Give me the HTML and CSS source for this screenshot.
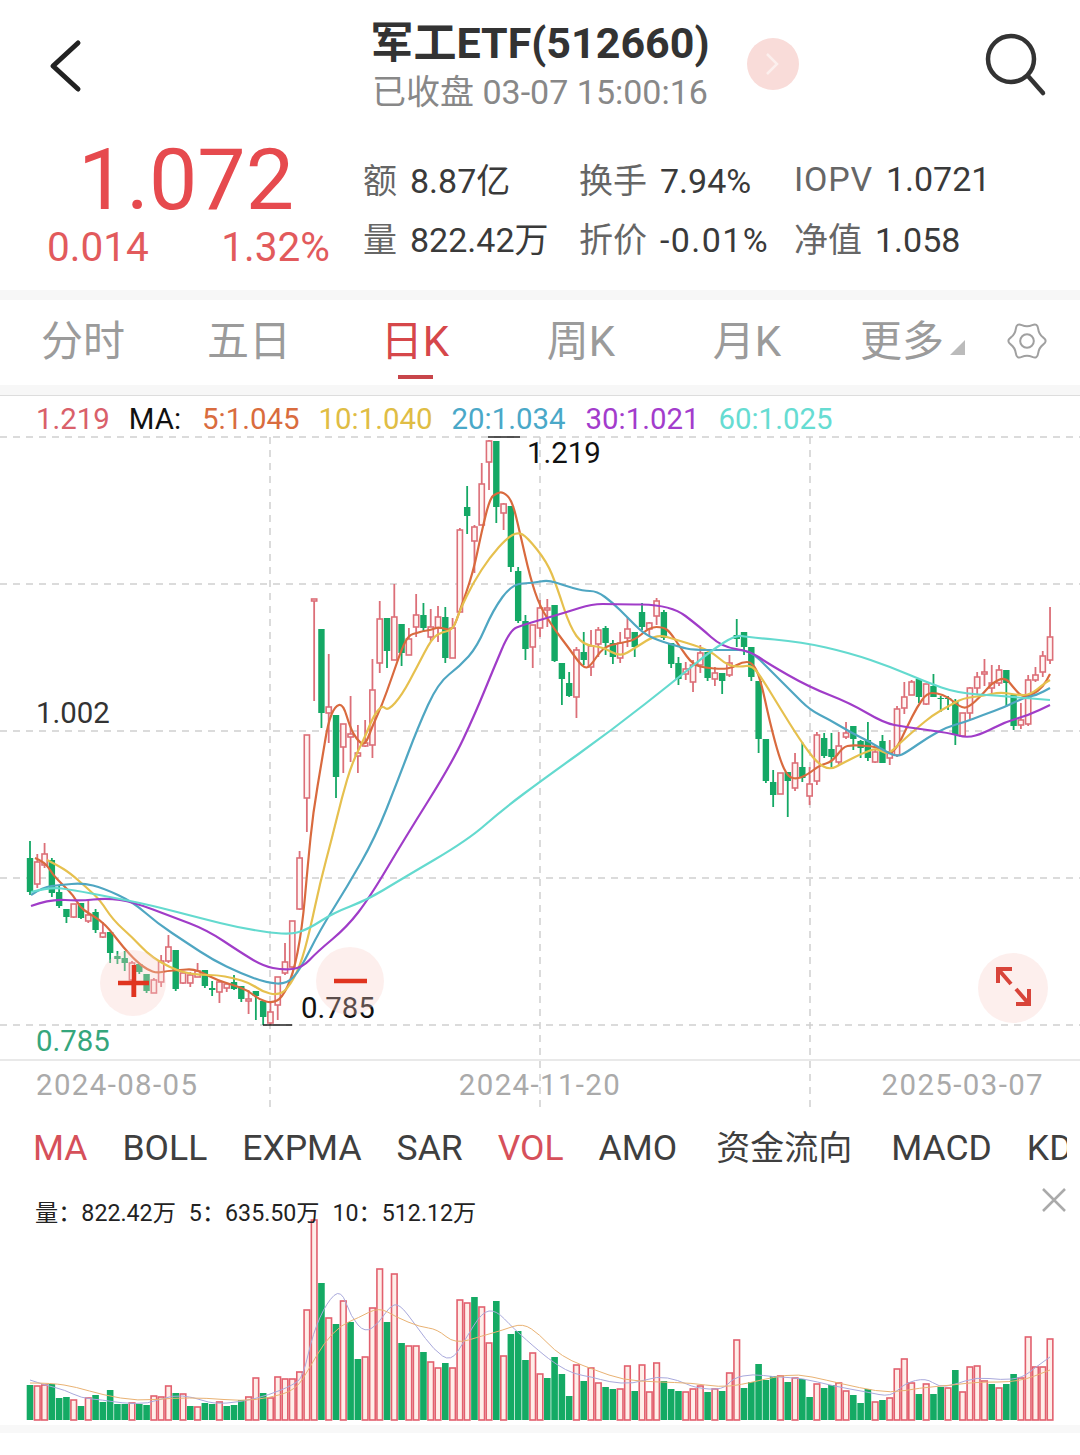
FILE: index.html
```html
<!DOCTYPE html>
<html lang="zh-CN">
<head>
  <meta charset="UTF-8" />
  <meta name="viewport" content="width=device-width, initial-scale=1.0"/>
  <title>军工ETF(512660)</title>
  <link rel="stylesheet" href="styles.css">
</head>
<body>

<header class="topbar">
  <div class="topbar-left">
    <svg class="back-icon" width="36" height="56" viewBox="0 0 36 56"><path d="M30 5 L5 28 L30 51"/></svg>
  </div>
  <div class="title-block">
    <div class="title">军工ETF(512660)</div>
    <div class="subtitle">已收盘 03-07 15:00:16</div>
  </div>
  <div class="topbar-right">
    <div class="next-badge">
      <svg width="20" height="26" viewBox="0 0 20 26"><path d="M4 3 L14 13 L4 23"/></svg>
    </div>
    <svg class="search-icon" width="64" height="64" viewBox="0 0 64 64"><circle cx="28" cy="26" r="23"/><path d="M45 43 L60 60"/></svg>
  </div>
</header>

<section class="quote">
  <div class="price-box">
    <div class="price">1.072</div>
    <div class="change"><span>0.014</span><span>1.32%</span></div>
  </div>
  <div class="stats">
    <div class="stat"><span class="label">额</span><span class="value">8.87亿</span></div>
    <div class="stat"><span class="label">换手</span><span class="value">7.94%</span></div>
    <div class="stat"><span class="label wide">IOPV</span><span class="value">1.0721</span></div>
    <div class="stat"><span class="label">量</span><span class="value">822.42万</span></div>
    <div class="stat"><span class="label">折价</span><span class="value neg">-0.01%</span></div>
    <div class="stat"><span class="label">净值</span><span class="value">1.058</span></div>
  </div>
</section>

<nav class="period-tabs">
  <a class="period">分时</a>
  <a class="period">五日</a>
  <a class="period active">日K</a>
  <a class="period">周K</a>
  <a class="period">月K</a>
  <a class="period more">更多<i class="corner"></i></a>
  <svg class="gear" width="40" height="40" viewBox="-22 -22 44 44">
    <path d="M18,-3.75 Q23,0 18,3.75 Q13,7.5 12.25,13.7 Q11.5,19.9 5.75,17.45 Q0,15 -5.75,17.45 Q-11.5,19.9 -12.25,13.7 Q-13,7.5 -18,3.75 Q-23,0 -18,-3.75 Q-13,-7.5 -12.25,-13.7 Q-11.5,-19.9 -5.75,-17.45 Q0,-15 5.75,-17.45 Q11.5,-19.9 12.25,-13.7 Q13,-7.5 18,-3.75Z"/>
    <circle r="7.5"/>
  </svg>
</nav>

<section class="chart">
  <div class="ma-legend">
    <span class="c-red">1.219</span>
    <span class="c-black">MA:</span>
    <span class="c-ma5">5:1.045</span>
    <span class="c-ma10">10:1.040</span>
    <span class="c-ma20">20:1.034</span>
    <span class="c-ma30">30:1.021</span>
    <span class="c-ma60">60:1.025</span>
  </div>

  <svg class="kline" width="1080" height="680" viewBox="0 432 1080 680">
    <g class="grid">
      <path d="M0 437H1080M0 584H1080M0 731H1080M0 878H1080M0 1025H1080"/>
      <path d="M270 437V1112M540 437V1112M810 437V1112"/>
    </g>
    <path class="axis" d="M0 1060H1080"/>
    <g id="candles"></g>
    <g id="maLines"></g>
    <path class="marker" d="M488 437H520M263 1025H292"/>
    <text class="lbl" x="527" y="463">1.219</text>
    <text class="lbl" x="301" y="1018">0.785</text>
    <text class="lbl dark" x="36" y="723">1.002</text>
    <text class="lbl green" x="36" y="1051">0.785</text>
    <text class="lbl date" x="36" y="1095">2024-08-05</text>
    <text class="lbl date" x="540" y="1095" text-anchor="middle">2024-11-20</text>
    <text class="lbl date" x="1044" y="1095" text-anchor="end">2025-03-07</text>
  </svg>

  <div class="zoom-btn zoom-in">
    <svg width="66" height="66" viewBox="0 0 66 66"><path d="M18 33H49M34 15V47"/></svg>
  </div>
  <div class="zoom-btn zoom-out">
    <svg width="68" height="68" viewBox="0 0 68 68"><path d="M18 34H51"/></svg>
  </div>
  <div class="zoom-btn expand">
    <svg width="70" height="70" viewBox="0 0 70 70"><path d="M34 16H20V30M20 16L33 31M38 36L51 51M38 51H51V36"/></svg>
  </div>
</section>

<nav class="indicator-tabs">
  <span class="on">MA</span>
  <span>BOLL</span>
  <span>EXPMA</span>
  <span>SAR</span>
  <span class="on">VOL</span>
  <span>AMO</span>
  <span class="flow">资金流向</span>
  <span>MACD</span>
  <span>KDJ</span>
</nav>

<section class="volume">
  <div class="vol-legend">
    <span>量：822.42万</span>
    <span>5：635.50万</span>
    <span>10：512.12万</span>
  </div>
  <svg class="close-icon" width="26" height="26" viewBox="0 0 26 26"><path d="M2 2L24 24M24 2L2 24"/></svg>
  <svg class="vol-chart" width="1080" height="240" viewBox="0 1185 1080 240">
    <g id="volBars"></g>
    <g id="volLines"></g>
  </svg>
</section>
<div class="foot-band"></div>

<script src="script.js"></script>
</body>
</html>
```

FILE: styles.css
```css
* {
  box-sizing: border-box;
}

html, body {
  height: 1455px;
  overflow: hidden;
}

body {
  margin: 0;
  background: white;
  color: #333;
  font-family: Roboto, "Noto Sans CJK SC", sans-serif;
}

/* top bar */
.topbar {
  display: grid;
  grid-template-columns: 1fr auto 1fr;
  height: 130px;
  align-items: center;
}

.topbar-left {
  padding-left: 48px;
  padding-top: 2px;
}

.back-icon {
  display: block;
}

.back-icon path {
  fill: none;
  stroke: #222;
  stroke-width: 5;
  stroke-linecap: round;
  stroke-linejoin: round;
}

.title-block {
  align-self: start;
  padding-top: 18px;
  text-align: center;
}

.title {
  font-size: 43px;
  line-height: 50px;
  font-weight: 700;
  color: #333;
}

.subtitle {
  font-size: 34px;
  line-height: 49px;
  color: #888;
}

.topbar-right {
  display: flex;
  align-items: center;
  justify-content: space-between;
  padding-left: 37px;
  padding-right: 33px;
}

.next-badge {
  display: flex;
  width: 52px;
  height: 52px;
  margin-top: -2px;
  border-radius: 50%;
  background: #f9dcd9;
  align-items: center;
  justify-content: center;
}

.next-badge path {
  fill: none;
  stroke: #fcefed;
  stroke-width: 2.5;
}

.search-icon circle,
.search-icon path {
  fill: none;
  stroke: #333;
  stroke-width: 4.5;
  stroke-linecap: round;
}

/* price and stats */
.quote {
  display: flex;
  height: 160px;
  padding-left: 47px;
}

.price-box {
  width: 283px;
  color: #e64a4e;
}

.price {
  padding-top: 2px;
  padding-right: 5px;
  font-size: 86px;
  line-height: 96px;
  text-align: center;
}

.change {
  display: flex;
  justify-content: space-between;
  margin-top: -3px;
  font-size: 40.5px;
  line-height: 44px;
  color: #e25a5c;
}

.stats {
  display: grid;
  grid-template-columns: 216px 215px auto;
  grid-auto-rows: 59px;
  margin-left: 33px;
  padding-top: 19px;
  font-size: 34px;
  align-items: center;
}

.stat .label {
  margin-right: 13px;
  color: #666;
}

.stat .label.wide {
  letter-spacing: 0.8px;
}

.stat .value {
  color: #3a3a3a;
}

.stat .value.neg {
  letter-spacing: 1.4px;
}

/* period tabs */
.period-tabs {
  position: relative;
  display: flex;
  height: 105px;
  padding-bottom: 10px;
  border-top: 10px solid #f7f7f7;
  border-bottom: 10px solid #f7f7f7;
}

.period {
  position: relative;
  width: 166px;
  text-align: center;
  font-size: 42px;
  line-height: 83px;
  color: #9b9b9b;
}

.period.active {
  color: #d6474a;
}

.period.active::after {
  content: "";
  position: absolute;
  left: 66px;
  bottom: -4px;
  width: 35px;
  height: 4px;
  background: #c8454a;
}

.more {
  width: 160px;
  padding-right: 16px;
}

.corner {
  position: absolute;
  right: 25px;
  top: 40px;
  border-left: 15px solid transparent;
  border-bottom: 15px solid #bbb;
}

.gear {
  position: absolute;
  right: 33px;
  top: 21px;
}

.gear path,
.gear circle {
  fill: none;
  stroke: #a0a0a0;
  stroke-width: 2.2;
}

/* k-line */
.chart {
  position: relative;
  height: 717px;
  border-top: 1px solid #ddd;
}

.ma-legend {
  display: flex;
  gap: 19px;
  height: 36px;
  padding-top: 8px;
  padding-left: 36px;
  font-size: 29.4px;
  line-height: 30px;
  white-space: nowrap;
}

.c-red { color: #d9606a; }
.c-black { color: #111; margin-right: 2px; }
.c-ma5 { color: #d96c3e; }
.c-ma10 { color: #dfbd45; }
.c-ma20 { color: #4aa8c8; margin-right: 1px; }
.c-ma30 { color: #a33ccc; }
.c-ma60 { color: #66dcd2; }

.kline {
  display: block;
}

.grid path {
  fill: none;
  stroke: #cfcfcf;
  stroke-width: 1.5;
  stroke-dasharray: 7 6;
}

.axis {
  stroke: #e2e2e2;
  stroke-width: 1.5;
}

.marker {
  stroke: #222;
  stroke-width: 1.5;
}

.lbl {
  font-size: 29.4px;
  fill: #111;
}

.lbl.dark { fill: #333; }
.lbl.green { fill: #35a67c; }
.lbl.date {
  fill: #aaa;
  letter-spacing: 1.4px;
}

.zoom-btn {
  position: absolute;
  border-radius: 50%;
  background: rgba(249, 205, 198, 0.32);
}

.zoom-btn svg {
  display: block;
}

.zoom-btn path {
  fill: none;
  stroke: #e0341f;
  stroke-width: 4.5;
}

.zoom-in {
  left: 100px;
  top: 554px;
  width: 66px;
  height: 66px;
}

.zoom-out {
  left: 316px;
  top: 551px;
  width: 68px;
  height: 68px;
}

.expand {
  left: 978px;
  top: 557px;
  width: 70px;
  height: 70px;
}

.expand path {
  stroke: #d8443a;
  stroke-width: 4;
}

/* indicator tabs */
.indicator-tabs {
  display: flex;
  gap: 35px;
  width: 1067px;
  height: 73px;
  padding-left: 33px;
  overflow: hidden;
  font-size: 35.5px;
  line-height: 72px;
  white-space: nowrap;
  color: #3f3f3f;
}

.indicator-tabs .on {
  color: #d6505a;
}

.indicator-tabs .flow {
  margin: 0 4px;
  font-size: 34px;
}

/* volume */
.volume {
  position: relative;
  height: 240px;
}

.vol-legend {
  position: absolute;
  left: 35px;
  top: 13px;
  display: flex;
  gap: 13px;
  font-size: 23.2px;
  line-height: 30px;
  color: #222;
  z-index: 1;
}

.close-icon {
  position: absolute;
  right: 13px;
  top: 2px;
}

.close-icon path {
  fill: none;
  stroke: #aaa;
  stroke-width: 2.5;
}

.vol-chart {
  display: block;
}

.foot-band {
  height: 8px;
  background: #f8f8f8;
}
```

FILE: script.js
```js
const NS = 'http://www.w3.org/2000/svg';
const START = 30;
const STEP = 7.286;

function add(parent, tag, attrs) {
  const node = document.createElementNS(NS, tag);
  for (const key in attrs) node.setAttribute(key, attrs[key]);
  parent.appendChild(node);
  return node;
}

// [direction, body top, body bottom, high, low] in page pixels
const candles = [
  ['d',858,892,841,895],['u',862,884,854,888],['u',854,865,843,868],['d',860,893,858,897],['d',892,906,886,908],
  ['d',909,917,909,923],['u',904,917,904,918],['d',903,918,903,919],['u',915,921,900,923],['d',912,930,909,933],
  ['u',933,937,922,938],['d',932,953,932,963],['d',956,959,951,964],['d',958,963,951,971],['u',963,980,961,997],
  ['d',964,972,964,974],['d',974,991,974,993],['u',980,993,978,993],['u',961,982,955,987],['u',947,961,935,963],
  ['d',950,989,950,991],['u',973,983,971,984],['u',975,983,972,987],['u',971,977,963,977],['d',970,986,970,988],
  ['d',988,990,981,996],['u',982,992,980,1003],['u',984,988,984,992],['d',982,989,975,990],['d',986,999,986,1002],
  ['u',999,1001,990,1014],['d',991,996,991,1020],['d',1001,1017,1001,1025],['u',1012,1023,1003,1025],['u',977,1005,977,1020],
  ['u',962,973,943,975],['u',921,967,921,968],['u',858,909,851,910],['u',735,798,735,832],['u',599,601,599,701],
  ['d',629,713,629,728],['u',707,713,654,743],['d',715,777,715,798],['u',724,747,724,773],['u',734,737,696,762],
  ['u',753,756,725,773],['u',743,746,720,747],['u',690,745,659,758],['u',619,663,601,673],['d',618,651,618,668],
  ['u',617,660,584,660],['d',624,653,624,666],['u',639,655,628,655],['u',615,627,594,637],['d',615,628,603,632],
  ['u',627,637,609,641],['u',617,628,606,642],['d',617,658,607,663],['u',628,658,618,658],['u',530,612,528,612],
  ['d',507,516,486,534],['u',527,541,525,573],['u',484,525,463,525],['u',441,462,440,490],['d',441,507,441,523],
  ['u',504,513,503,530],['d',506,567,506,572],['d',571,621,567,623],['d',621,649,615,660],['u',625,647,625,668],
  ['u',608,628,600,637],['u',608,610,599,627],['d',605,661,605,662],['d',663,679,663,705],['d',683,696,672,697],
  ['u',650,697,647,718],['d',652,660,632,665],['u',646,667,630,676],['u',630,644,627,657],['d',628,643,626,655],
  ['d',643,657,640,664],['u',643,658,632,663],['u',629,638,617,647],['d',632,647,632,657],['d',612,627,603,630],
  ['u',623,629,622,636],['u',601,616,598,625],['d',612,638,610,640],['d',643,664,643,668],['d',663,679,657,685],
  ['u',669,674,662,680],['u',665,682,660,692],['u',653,665,645,673],['d',652,678,652,681],['u',673,679,667,686],
  ['d',673,681,673,694],['u',663,675,655,677],['d',635,639,619,647],['d',632,647,632,655],['d',647,677,647,681],
  ['d',681,739,681,753],['d',739,781,739,783],['d',782,795,770,807],['u',773,794,773,794],['d',772,781,772,817],
  ['u',763,788,753,791],['d',767,778,742,782],['u',784,796,767,805],['u',735,781,732,785],['d',738,756,733,758],
  ['d',749,757,733,769],['u',746,762,732,765],['u',733,737,722,739],['d',726,739,726,750],['d',741,748,740,758],
  ['d',740,758,722,761],['u',752,762,750,763],['d',741,763,735,763],['u',752,758,740,765],['u',709,755,706,757],
  ['u',697,708,682,714],['u',682,695,680,695],['d',679,697,679,703],['u',684,704,684,705],['d',686,697,674,697],
  ['d',698,699,696,712],['d',698,699,696,710],['d',702,735,699,745],['u',713,736,713,737],['u',688,713,687,720],
  ['u',677,688,672,695],['u',672,674,659,686],['u',683,688,665,693],['u',670,683,665,686],['d',670,683,670,707],
  ['d',695,726,695,730],['u',720,725,703,729],['u',680,724,675,726],['u',675,680,667,682],['u',656,672,651,677],
  ['u',637,660,607,664]
];

// bar height in pixels; negative means a falling day
const volumes = [
  -35,34,35,-36,-22,-23,20,-14,22,-25,-18,-30,-16,-16,17,-16,-15,24,23,34,
  -27,26,-14,13,-17,-16,18,-14,-15,-20,23,42,-27,22,43,41,41,48,110,200,
  -137,102,-96,119,-98,-61,63,112,151,-98,146,-77,74,74,-68,58,52,-57,52,120,
  117,-123,113,77,-119,64,-86,-89,-60,67,46,-42,-63,-46,-24,55,-39,52,37,-33,
  -31,31,54,-29,55,28,57,-39,-31,-29,28,31,34,-28,31,-29,47,80,-32,-38,
  -56,-40,-44,44,-38,42,-41,-23,36,-32,-35,37,29,-25,-17,-31,18,-20,22,51,
  61,37,-26,36,-26,-33,32,-50,28,53,54,39,-36,32,-36,-46,42,83,53,53,81
];

const maLines = {
  '#d96a3e': '35,858 45,862 53,875 63,885 73,895 80,907 88,913 100,920 110,930 123,947 137,962 148,970 157,973 167,971 180,970 193,969 203,973 217,980 233,985 247,990 260,1000 272,1003 282,998 293,975 302,930 308,863 313,813 322,760 328,723 335,706 343,704 350,727 357,740 365,746 372,727 382,705 392,677 402,648 409,635 417,633 423,631 431,630 438,627 445,629 453,630 460,610 473,573 482,530 490,498 497,493 503,492 512,500 520,533 530,577 540,607 555,630 568,647 583,668 590,667 603,647 620,643 635,640 650,627 663,627 670,632 680,647 693,665 707,668 722,669 732,668 742,662 752,662 760,677 770,723 780,760 788,777 797,779 807,775 820,765 832,762 843,747 852,745 867,746 877,747 888,755 897,748 907,727 917,707 927,693 937,693 948,697 960,707 968,708 982,695 992,683 1005,677 1013,687 1022,697 1032,695 1043,687 1050,674',
  '#e6c04e': '47,860 57,865 70,873 87,888 100,900 113,920 133,938 147,953 160,962 180,972 200,975 217,975 233,978 250,983 263,992 277,995 287,990 300,967 310,930 320,883 332,838 342,797 352,763 365,737 373,717 382,705 388,711 402,695 417,667 432,638 442,632 453,630 460,610 473,583 490,557 507,538 518,532 527,537 547,562 557,587 570,627 583,645 603,647 620,657 635,648 657,634 677,640 700,647 713,653 727,665 740,667 752,665 763,680 780,708 800,740 817,763 830,770 843,763 863,753 877,748 888,755 900,743 917,728 933,715 947,707 963,698 983,696 1000,692 1017,695 1030,695 1045,683 1050,680',
  '#4fa6c2': '31,895 43,887 60,885 83,883 103,888 133,902 157,923 187,943 213,960 240,973 267,983 287,984 300,970 320,930 347,887 375,838 398,780 418,727 438,683 460,666 477,647 493,610 512,584 533,583 548,580 563,585 583,591 597,591 613,603 627,617 643,633 657,640 680,647 693,650 727,650 750,650 770,670 793,693 810,710 830,720 850,732 870,742 883,750 897,757 907,752 927,738 947,727 965,722 983,715 1005,707 1023,698 1037,695 1050,688',
  '#a03cc8': '31,906 50,899 80,901 107,898 133,902 173,917 207,930 240,952 263,966 283,970 302,968 317,952 347,927 370,897 405,838 452,763 475,714 493,670 510,630 523,625 540,620 567,612 592,604 613,604 671,605 700,627 722,647 750,651 767,663 809,687 850,703 884,723 905,727 950,733 967,738 984,733 1005,722 1029,715 1050,705',
  '#64dacf': '31,892 50,887 73,890 110,897 150,905 200,918 240,928 287,935 307,930 333,913 367,900 400,880 468,840 502,810 545,778 612,730 678,678 712,650 736,635 747,637 802,642 850,653 891,667 926,682 957,693 1001,696 1050,700'
};

const volLines = {
  '#a9a9dc': '30,1380 45,1385 65,1390 81,1398 103,1400 121,1403 148,1404 172,1395 193,1397 213,1404 241,1402 269,1395 293,1385 303,1377 313,1333 327,1302 341,1289 351,1317 365,1333 379,1323 389,1307 399,1303 417,1327 434,1350 451,1362 465,1340 482,1312 496,1310 513,1328 540,1352 557,1365 574,1374 592,1377 609,1382 633,1384 657,1376 678,1380 695,1388 723,1390 733,1378 753,1374 774,1377 802,1378 833,1386 867,1392 891,1397 905,1383 926,1378 939,1387 953,1385 977,1377 1001,1380 1022,1378 1036,1367 1050,1357',
  '#e9b273': '30,1383 52,1383 76,1387 103,1395 138,1401 172,1398 207,1398 241,1401 269,1398 296,1390 310,1367 324,1343 341,1325 358,1318 379,1307 396,1317 420,1327 437,1329 455,1344 482,1336 503,1330 523,1323 540,1335 554,1350 571,1361 595,1370 623,1380 657,1382 692,1383 719,1387 740,1385 774,1377 798,1374 826,1380 860,1388 891,1393 919,1388 953,1385 977,1382 1019,1382 1050,1370'
};

// rounds the corners of a point list with quadratic segments
function smoothPath(text) {
  const pts = text.split(' ').map(p => p.split(',').map(Number));
  let d = `M${pts[0][0]} ${pts[0][1]}`;
  for (let i = 1; i < pts.length - 1; i++) {
    const mx = (pts[i][0] + pts[i + 1][0]) / 2;
    const my = (pts[i][1] + pts[i + 1][1]) / 2;
    d += `Q${pts[i][0]} ${pts[i][1]} ${mx} ${my}`;
  }
  const last = pts[pts.length - 1];
  return d + `L${last[0]} ${last[1]}`;
}

function drawLines(groupId, lines, width) {
  const group = document.getElementById(groupId);
  for (const color in lines) {
    add(group, 'path', { d: smoothPath(lines[color]), fill: 'none', stroke: color, 'stroke-width': width, 'stroke-linejoin': 'round' });
  }
}

function drawCandles() {
  const group = document.getElementById('candles');
  candles.forEach((c, i) => {
    const x = START + STEP * i;
    const [dir, top, bottom, high, low] = c;
    const up = dir === 'u';
    const color = up ? '#dc6f78' : '#14a865';
    add(group, 'path', { d: `M${x} ${high}V${low}`, stroke: color, 'stroke-width': 1.8 });
    if (up) {
      add(group, 'rect', { x: x - 2.6, y: top, width: 5.2, height: bottom - top, fill: '#fff6f4', stroke: color, 'stroke-width': 1.6 });
    } else {
      add(group, 'rect', { x: x - 3.2, y: top, width: 6.4, height: bottom - top, fill: color });
    }
  });
}

function drawVolumes() {
  const group = document.getElementById('volBars');
  volumes.forEach((v, i) => {
    const x = START + STEP * i;
    const h = Math.abs(v);
    if (v > 0) {
      add(group, 'rect', { x: x - 2.8, y: 1420 - h, width: 5.6, height: h, fill: '#feeee9', stroke: '#e2606e', 'stroke-width': 1.6 });
    } else {
      add(group, 'rect', { x: x - 3.3, y: 1420 - h, width: 6.6, height: h, fill: '#14aa64' });
    }
  });
}

drawCandles();
drawLines('maLines', maLines, 2.2);
drawVolumes();
drawLines('volLines', volLines, 1);
```
